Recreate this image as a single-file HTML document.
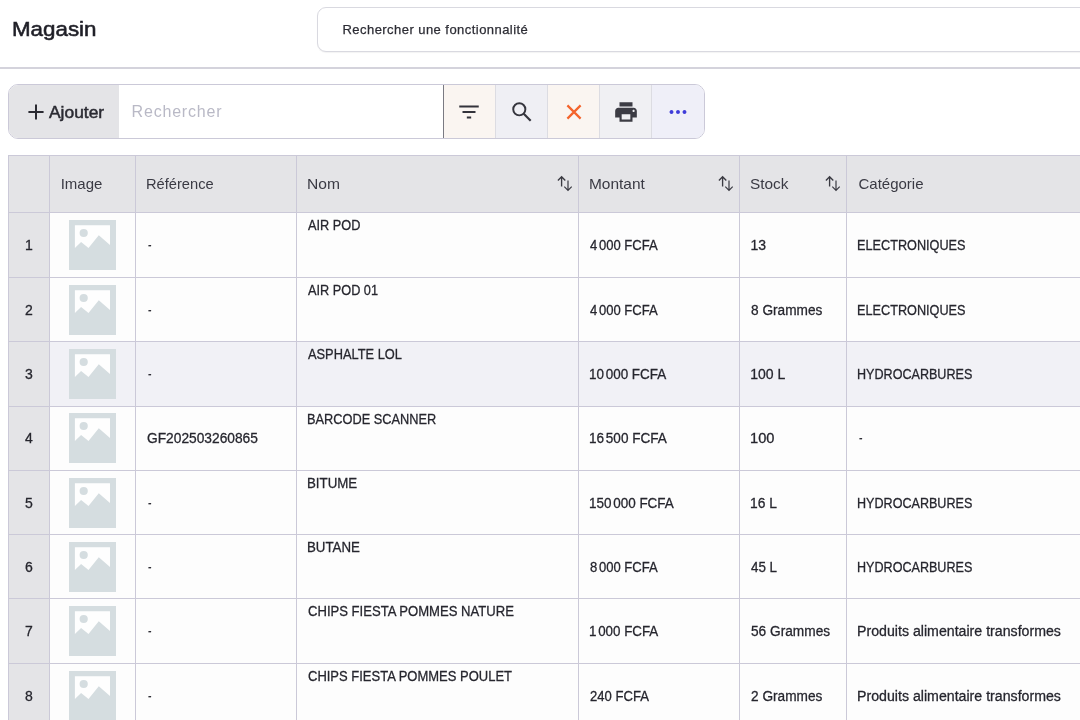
<!DOCTYPE html>
<html lang="fr">
<head>
<meta charset="utf-8">
<title>Magasin</title>
<style>
*{box-sizing:border-box;margin:0;padding:0}
html,body{width:1080px;height:720px;overflow:hidden;background:#fff;font-family:"Liberation Sans",sans-serif;color:#2b2b33}
.abs{position:absolute}
#layer{position:absolute;left:0;top:0;width:1080px;height:720px;will-change:transform;overflow:hidden}
#hdr{position:absolute;left:0;top:0;width:1080px;height:69px;border-bottom:2px solid #d4d3dc;background:#fff}
#title{position:absolute;left:11.500px;top:14px;font-size:19.800px;font-weight:400;-webkit-text-stroke:.55px #1f1f27;color:#1f1f27;line-height:30px;transform:scaleX(1.13);transform-origin:0 50%}
#gsearch{position:absolute;left:316.500px;top:7px;width:800px;height:45px;border:1.400px solid #d9d9e0;border-radius:9px;background:#fff;box-shadow:0 1px 1px rgba(0,0,0,.05)}
#gsearch span{position:absolute;left:25px;top:0;line-height:44px;font-size:13px;letter-spacing:.45px;color:#2d2d35;-webkit-text-stroke:.25px #2d2d35}
#tb{position:absolute;left:8px;top:84px;width:697px;height:55px;border:1px solid #cbc9d8;border-radius:10px;background:#fff;overflow:hidden}
#add{position:absolute;left:0;top:0;width:110px;height:53px;background:#e4e4e7}
#add span{position:absolute;left:39.800px;top:0;line-height:55px;font-size:15.600px;font-weight:400;-webkit-text-stroke:.45px #2a2a32;color:#2a2a32;transform:scaleX(1.115);transform-origin:0 50%}
#ph{position:absolute;left:122.600px;top:0;line-height:53px;font-size:16px;color:#b9b9c6;letter-spacing:.8px}
.btn{position:absolute;top:0;height:53px;width:52px;border-left:1px solid #dcdce2}
.btn svg{position:absolute}
#tbl{position:absolute;left:8px;top:155px;width:1080px;height:600px;border-top:1px solid #cbc9d8;border-left:1px solid #cbc9d8;background:#fdfdfd}
#th{position:absolute;left:0;top:155px;height:58px;width:1080px}
.row{position:absolute;left:0;width:1080px;height:64.29px}
.c{position:absolute;top:0;height:100%;border-left:1px solid #cbc9d8;border-top:1px solid #cbc9d8;font-size:14.5px;color:#26262e;background:#fdfdfd}
.row.hov .c{background:#f1f1f6}
.t{position:absolute;white-space:nowrap;line-height:18px;font-size:14px;color:#26262e;transform-origin:0 50%}
.t.mid,.t.nm,.t.num{-webkit-text-stroke:.28px #26262e}
.g{display:inline-block;width:1.800px}
.t.dash{-webkit-text-stroke:.15px #2e2e36;color:#2e2e36}
.t.hd{font-size:15px;color:#3a3a44}
.t.num{left:9px;width:40px;text-align:center}
.c0{left:8px;width:41px;background:#e4e4e7 !important}
.c1{left:49px;width:86px}
.c2{left:135px;width:161px}
.c3{left:296px;width:283px}
.c4{left:578px;width:161px}
.c5{left:739px;width:108px}
.c6{left:846px;width:240px}
.ph{position:absolute;left:19.100px;top:6.100px;width:47.200px;height:50px}
#th .c{background:#e4e4e7;font-size:15px;color:#3a3a44}
.srt{position:absolute;right:5px;top:21px}
</style>
</head>
<body>
<div id="layer">
<div id="hdr">
  <div id="title">Magasin</div>
  <div id="gsearch"><span>Rechercher une fonctionnalité</span></div>
</div>
<div id="tb">
  <div id="add">
    <svg class="abs" style="left:13.900px;top:13.600px" width="26" height="26" viewBox="0 0 24 24"><path d="M19 12.900h-6.100V19h-1.800v-6.100H5v-1.800h6.100V5h1.800v6.100H19z" fill="#2a2a32"/></svg>
    <span>Ajouter</span>
  </div>
  <div id="ph">Rechercher</div>
  <div class="btn" style="left:434px;width:52px;background:#faf5f1;border-left:1px solid #7a7a82">
    <svg style="left:12.400px;top:13.800px" width="26" height="26" viewBox="0 0 24 24"><path d="M10 18h4v-1.800h-4V18zM3 6v1.800h18V6H3zm3 6.900h12v-1.800H6v1.800z" fill="#33333b"/></svg>
  </div>
  <div class="btn" style="left:486px;background:#efeff4">
    <svg style="left:13px;top:14.300px" width="26" height="26" viewBox="0 0 24 24"><circle cx="9.500" cy="9.500" r="5.600" stroke="#35353d" stroke-width="1.800" fill="none"/><path d="M13.600 13.600L20 20" stroke="#35353d" stroke-width="2" fill="none"/></svg>
  </div>
  <div class="btn" style="left:538px;background:#faf5f1">
    <svg style="left:13px;top:13.500px" width="26" height="26" viewBox="0 0 24 24"><path d="M5.900 5.900L18.100 18.100M18.100 5.900L5.900 18.100" stroke="#f4642c" stroke-width="2.050" fill="none"/></svg>
  </div>
  <div class="btn" style="left:590px;background:#f0f0f3">
    <svg style="left:13px;top:13.600px" width="26" height="26" viewBox="0 0 24 24"><path d="M19 8H5c-1.660 0-3 1.340-3 3v6h4v4h12v-4h4v-6c0-1.660-1.340-3-3-3zm-3 11H8v-5h8v5zm3-7c-.55 0-1-.45-1-1s.45-1 1-1 1 .45 1 1-.45 1-1 1zm-1-9H6v4h12V3z" fill="#3c3c44"/></svg>
  </div>
  <div class="btn" style="left:642px;background:#efeff8;width:55px">
    <svg style="left:13px;top:13.700px" width="26" height="26" viewBox="0 0 24 24"><path d="M6 10.200c-1 0-1.800.8-1.800 1.800s.8 1.800 1.800 1.800 1.800-.8 1.800-1.800-.8-1.800-1.800-1.800zm12 0c-1 0-1.800.8-1.800 1.800s.8 1.800 1.800 1.800 1.800-.8 1.800-1.800-.8-1.800-1.800-1.800zm-6 0c-1 0-1.800.8-1.800 1.800s.8 1.800 1.800 1.800 1.800-.8 1.800-1.800-.8-1.800-1.800-1.800z" fill="#3f3cd9"/></svg>
  </div>
</div>

<div id="tbl"></div>
<div id="th">
  <div class="c c0"></div>
  <div class="c c1"></div>
  <div class="c c2"></div>
  <div class="c c3"></div>
  <div class="c c4"></div>
  <div class="c c5"></div>
  <div class="c c6"></div>
</div>
<span id="h0" class="t hd" style="left:60.66px;top:174.68px;transform:scaleX(1.0000)">Image</span><span id="h1" class="t hd" style="left:146.18px;top:174.68px;transform:scaleX(0.9779)">Référence</span><span id="h2" class="t hd" style="left:307.44px;top:174.68px;transform:scaleX(1.0400)">Nom</span><span id="h3" class="t hd" style="left:589.18px;top:174.68px;transform:scaleX(1.0304)">Montant</span><span id="h4" class="t hd" style="left:750.18px;top:174.68px;transform:scaleX(1.0250)">Stock</span><span id="h5" class="t hd" style="left:858.50px;top:174.68px;transform:scaleX(1.0000)">Catégorie</span>
<svg class="abs" style="left:557.100px;top:175.300px" width="16" height="17" viewBox="0 0 16 17"><path d="M4.600 11.400V1.800M0.900 5.400L4.600 1.700L8.300 5.400" stroke="#3a3a42" stroke-width="1.350" fill="none"/><path d="M11 5.600V15.300M7.300 11.700L11 15.400L14.700 11.700" stroke="#3a3a42" stroke-width="1.200" fill="none"/></svg>
<svg class="abs" style="left:717.900px;top:175.300px" width="16" height="17" viewBox="0 0 16 17"><path d="M4.600 11.400V1.800M0.900 5.400L4.600 1.700L8.300 5.400" stroke="#3a3a42" stroke-width="1.350" fill="none"/><path d="M11 5.600V15.300M7.300 11.700L11 15.400L14.700 11.700" stroke="#3a3a42" stroke-width="1.200" fill="none"/></svg>
<svg class="abs" style="left:825.200px;top:175.300px" width="16" height="17" viewBox="0 0 16 17"><path d="M4.600 11.400V1.800M0.900 5.400L4.600 1.700L8.300 5.400" stroke="#3a3a42" stroke-width="1.350" fill="none"/><path d="M11 5.600V15.300M7.300 11.700L11 15.400L14.700 11.700" stroke="#3a3a42" stroke-width="1.200" fill="none"/></svg>

<div class="row" style="top:212px;height:65px">
<div class="c c0"></div>
<div class="c c1"><svg class="ph" style="top:7.10px" viewBox="0 0 47.2 50"><rect width="47.2" height="50" fill="#d5dde0"/><path d="M5.900 5.200H41V24.900L29.800 15.300L19.500 27.900L12.100 22L5.900 28.100Z" fill="#fefefe"/><circle cx="14.700" cy="13" r="4.100" fill="#d5dde0"/></svg></div>
<div class="c c2"></div><div class="c c3"></div><div class="c c4"></div><div class="c c5"></div><div class="c c6"></div>
</div>
<span class="t num" style="top:236.13px">1</span>
<span id="ref0" class="t mid dash" style="left:147.50px;top:236.13px;transform:scaleX(0.7500)">-</span><span id="nom0" class="t nm" style="left:308.00px;top:216.13px;transform:scaleX(0.9105)">AIR POD</span><span id="mnt0" class="t mid" style="left:590.00px;top:236.13px;transform:scaleX(0.9313)">4<i class="g"></i>000 FCFA</span><span id="stk0" class="t mid" style="left:750.38px;top:236.13px;transform:scaleX(1.0000)">13</span><span id="cat0" class="t mid" style="left:856.92px;top:236.13px;transform:scaleX(0.9059)">ELECTRONIQUES</span>
<div class="row" style="top:277px;height:64px">
<div class="c c0"></div>
<div class="c c1"><svg class="ph" style="top:6.60px" viewBox="0 0 47.2 50"><rect width="47.2" height="50" fill="#d5dde0"/><path d="M5.900 5.200H41V24.900L29.800 15.300L19.500 27.900L12.100 22L5.900 28.100Z" fill="#fefefe"/><circle cx="14.700" cy="13" r="4.100" fill="#d5dde0"/></svg></div>
<div class="c c2"></div><div class="c c3"></div><div class="c c4"></div><div class="c c5"></div><div class="c c6"></div>
</div>
<span class="t num" style="top:301.13px">2</span>
<span id="ref1" class="t mid dash" style="left:147.50px;top:301.13px;transform:scaleX(0.7500)">-</span><span id="nom1" class="t nm" style="left:308.00px;top:281.13px;transform:scaleX(0.9091)">AIR POD 01</span><span id="mnt1" class="t mid" style="left:590.00px;top:301.13px;transform:scaleX(0.9313)">4<i class="g"></i>000 FCFA</span><span id="stk1" class="t mid" style="left:751.00px;top:301.13px;transform:scaleX(0.9753)">8 Grammes</span><span id="cat1" class="t mid" style="left:856.92px;top:301.13px;transform:scaleX(0.9059)">ELECTRONIQUES</span>
<div class="row hov" style="top:341px;height:65px">
<div class="c c0"></div>
<div class="c c1"><svg class="ph" style="top:6.75px" viewBox="0 0 47.2 50"><rect width="47.2" height="50" fill="#d5dde0"/><path d="M5.900 5.200H41V24.900L29.800 15.300L19.500 27.900L12.100 22L5.900 28.100Z" fill="#fefefe"/><circle cx="14.700" cy="13" r="4.100" fill="#d5dde0"/></svg></div>
<div class="c c2"></div><div class="c c3"></div><div class="c c4"></div><div class="c c5"></div><div class="c c6"></div>
</div>
<span class="t num" style="top:365.13px">3</span>
<span id="ref2" class="t mid dash" style="left:147.50px;top:365.13px;transform:scaleX(0.7500)">-</span><span id="nom2" class="t nm" style="left:308.00px;top:345.13px;transform:scaleX(0.9165)">ASPHALTE LOL</span><span id="mnt2" class="t mid" style="left:589.20px;top:365.13px;transform:scaleX(0.9608)">10<i class="g"></i>000 FCFA</span><span id="stk2" class="t mid" style="left:750.20px;top:365.13px;transform:scaleX(1.0000)">100 L</span><span id="cat2" class="t mid" style="left:856.92px;top:365.13px;transform:scaleX(0.8984)">HYDROCARBURES</span>
<div class="row" style="top:406px;height:64px">
<div class="c c0"></div>
<div class="c c1"><svg class="ph" style="top:6.30px" viewBox="0 0 47.2 50"><rect width="47.2" height="50" fill="#d5dde0"/><path d="M5.900 5.200H41V24.900L29.800 15.300L19.500 27.900L12.100 22L5.900 28.100Z" fill="#fefefe"/><circle cx="14.700" cy="13" r="4.100" fill="#d5dde0"/></svg></div>
<div class="c c2"></div><div class="c c3"></div><div class="c c4"></div><div class="c c5"></div><div class="c c6"></div>
</div>
<span class="t num" style="top:429.13px">4</span>
<span id="ref3" class="t mid" style="left:147.00px;top:429.13px;transform:scaleX(0.9823)">GF202503260865</span><span id="nom3" class="t nm" style="left:307.20px;top:410.13px;transform:scaleX(0.9121)">BARCODE SCANNER</span><span id="mnt3" class="t mid" style="left:589.20px;top:429.13px;transform:scaleX(0.9682)">16<i class="g"></i>500 FCFA</span><span id="stk3" class="t mid" style="left:750.20px;top:429.13px;transform:scaleX(1.0455)">100</span><span id="cat3" class="t mid dash" style="left:858.50px;top:429.13px;transform:scaleX(0.7500)">-</span>
<div class="row" style="top:470px;height:64px">
<div class="c c0"></div>
<div class="c c1"><svg class="ph" style="top:6.70px" viewBox="0 0 47.2 50"><rect width="47.2" height="50" fill="#d5dde0"/><path d="M5.900 5.200H41V24.900L29.800 15.300L19.500 27.900L12.100 22L5.900 28.100Z" fill="#fefefe"/><circle cx="14.700" cy="13" r="4.100" fill="#d5dde0"/></svg></div>
<div class="c c2"></div><div class="c c3"></div><div class="c c4"></div><div class="c c5"></div><div class="c c6"></div>
</div>
<span class="t num" style="top:494.13px">5</span>
<span id="ref4" class="t mid dash" style="left:147.50px;top:494.13px;transform:scaleX(0.7500)">-</span><span id="nom4" class="t nm" style="left:307.20px;top:474.13px;transform:scaleX(0.9500)">BITUME</span><span id="mnt4" class="t mid" style="left:589.20px;top:494.13px;transform:scaleX(0.9615)">150<i class="g"></i>000 FCFA</span><span id="stk4" class="t mid" style="left:750.20px;top:494.13px;transform:scaleX(0.9861)">16 L</span><span id="cat4" class="t mid" style="left:856.92px;top:494.13px;transform:scaleX(0.8984)">HYDROCARBURES</span>
<div class="row" style="top:534px;height:64px">
<div class="c c0"></div>
<div class="c c1"><svg class="ph" style="top:6.80px" viewBox="0 0 47.2 50"><rect width="47.2" height="50" fill="#d5dde0"/><path d="M5.900 5.200H41V24.900L29.800 15.300L19.500 27.900L12.100 22L5.900 28.100Z" fill="#fefefe"/><circle cx="14.700" cy="13" r="4.100" fill="#d5dde0"/></svg></div>
<div class="c c2"></div><div class="c c3"></div><div class="c c4"></div><div class="c c5"></div><div class="c c6"></div>
</div>
<span class="t num" style="top:558.13px">6</span>
<span id="ref5" class="t mid dash" style="left:147.50px;top:558.13px;transform:scaleX(0.7500)">-</span><span id="nom5" class="t nm" style="left:307.20px;top:538.13px;transform:scaleX(0.9491)">BUTANE</span><span id="mnt5" class="t mid" style="left:590.00px;top:558.13px;transform:scaleX(0.9313)">8<i class="g"></i>000 FCFA</span><span id="stk5" class="t mid" style="left:751.00px;top:558.13px;transform:scaleX(0.9556)">45 L</span><span id="cat5" class="t mid" style="left:856.92px;top:558.13px;transform:scaleX(0.8984)">HYDROCARBURES</span>
<div class="row" style="top:598px;height:65px">
<div class="c c0"></div>
<div class="c c1"><svg class="ph" style="top:7.15px" viewBox="0 0 47.2 50"><rect width="47.2" height="50" fill="#d5dde0"/><path d="M5.900 5.200H41V24.900L29.800 15.300L19.500 27.900L12.100 22L5.900 28.100Z" fill="#fefefe"/><circle cx="14.700" cy="13" r="4.100" fill="#d5dde0"/></svg></div>
<div class="c c2"></div><div class="c c3"></div><div class="c c4"></div><div class="c c5"></div><div class="c c6"></div>
</div>
<span class="t num" style="top:622.13px">7</span>
<span id="ref6" class="t mid dash" style="left:147.50px;top:622.13px;transform:scaleX(0.7500)">-</span><span id="nom6" class="t nm" style="left:308.00px;top:602.13px;transform:scaleX(0.9341)">CHIPS FIESTA POMMES NATURE</span><span id="mnt6" class="t mid" style="left:589.20px;top:622.13px;transform:scaleX(0.9538)">1<i class="g"></i>000 FCFA</span><span id="stk6" class="t mid" style="left:751.00px;top:622.13px;transform:scaleX(0.9778)">56 Grammes</span><span id="cat6" class="t mid" style="left:856.92px;top:622.13px;transform:scaleX(1.0119)">Produits alimentaire transformes</span>
<div class="row" style="top:663px;height:64px">
<div class="c c0"></div>
<div class="c c1"><svg class="ph" style="top:6.65px" viewBox="0 0 47.2 50"><rect width="47.2" height="50" fill="#d5dde0"/><path d="M5.900 5.200H41V24.900L29.800 15.300L19.500 27.900L12.100 22L5.900 28.100Z" fill="#fefefe"/><circle cx="14.700" cy="13" r="4.100" fill="#d5dde0"/></svg></div>
<div class="c c2"></div><div class="c c3"></div><div class="c c4"></div><div class="c c5"></div><div class="c c6"></div>
</div>
<span class="t num" style="top:687.13px">8</span>
<span id="ref7" class="t mid dash" style="left:147.50px;top:687.13px;transform:scaleX(0.7500)">-</span><span id="nom7" class="t nm" style="left:308.00px;top:667.13px;transform:scaleX(0.9277)">CHIPS FIESTA POMMES POULET</span><span id="mnt7" class="t mid" style="left:590.00px;top:687.13px;transform:scaleX(0.9349)">240 FCFA</span><span id="stk7" class="t mid" style="left:751.00px;top:687.13px;transform:scaleX(0.9753)">2 Grammes</span><span id="cat7" class="t mid" style="left:856.92px;top:687.13px;transform:scaleX(1.0119)">Produits alimentaire transformes</span>
</div>
</body>
</html>
